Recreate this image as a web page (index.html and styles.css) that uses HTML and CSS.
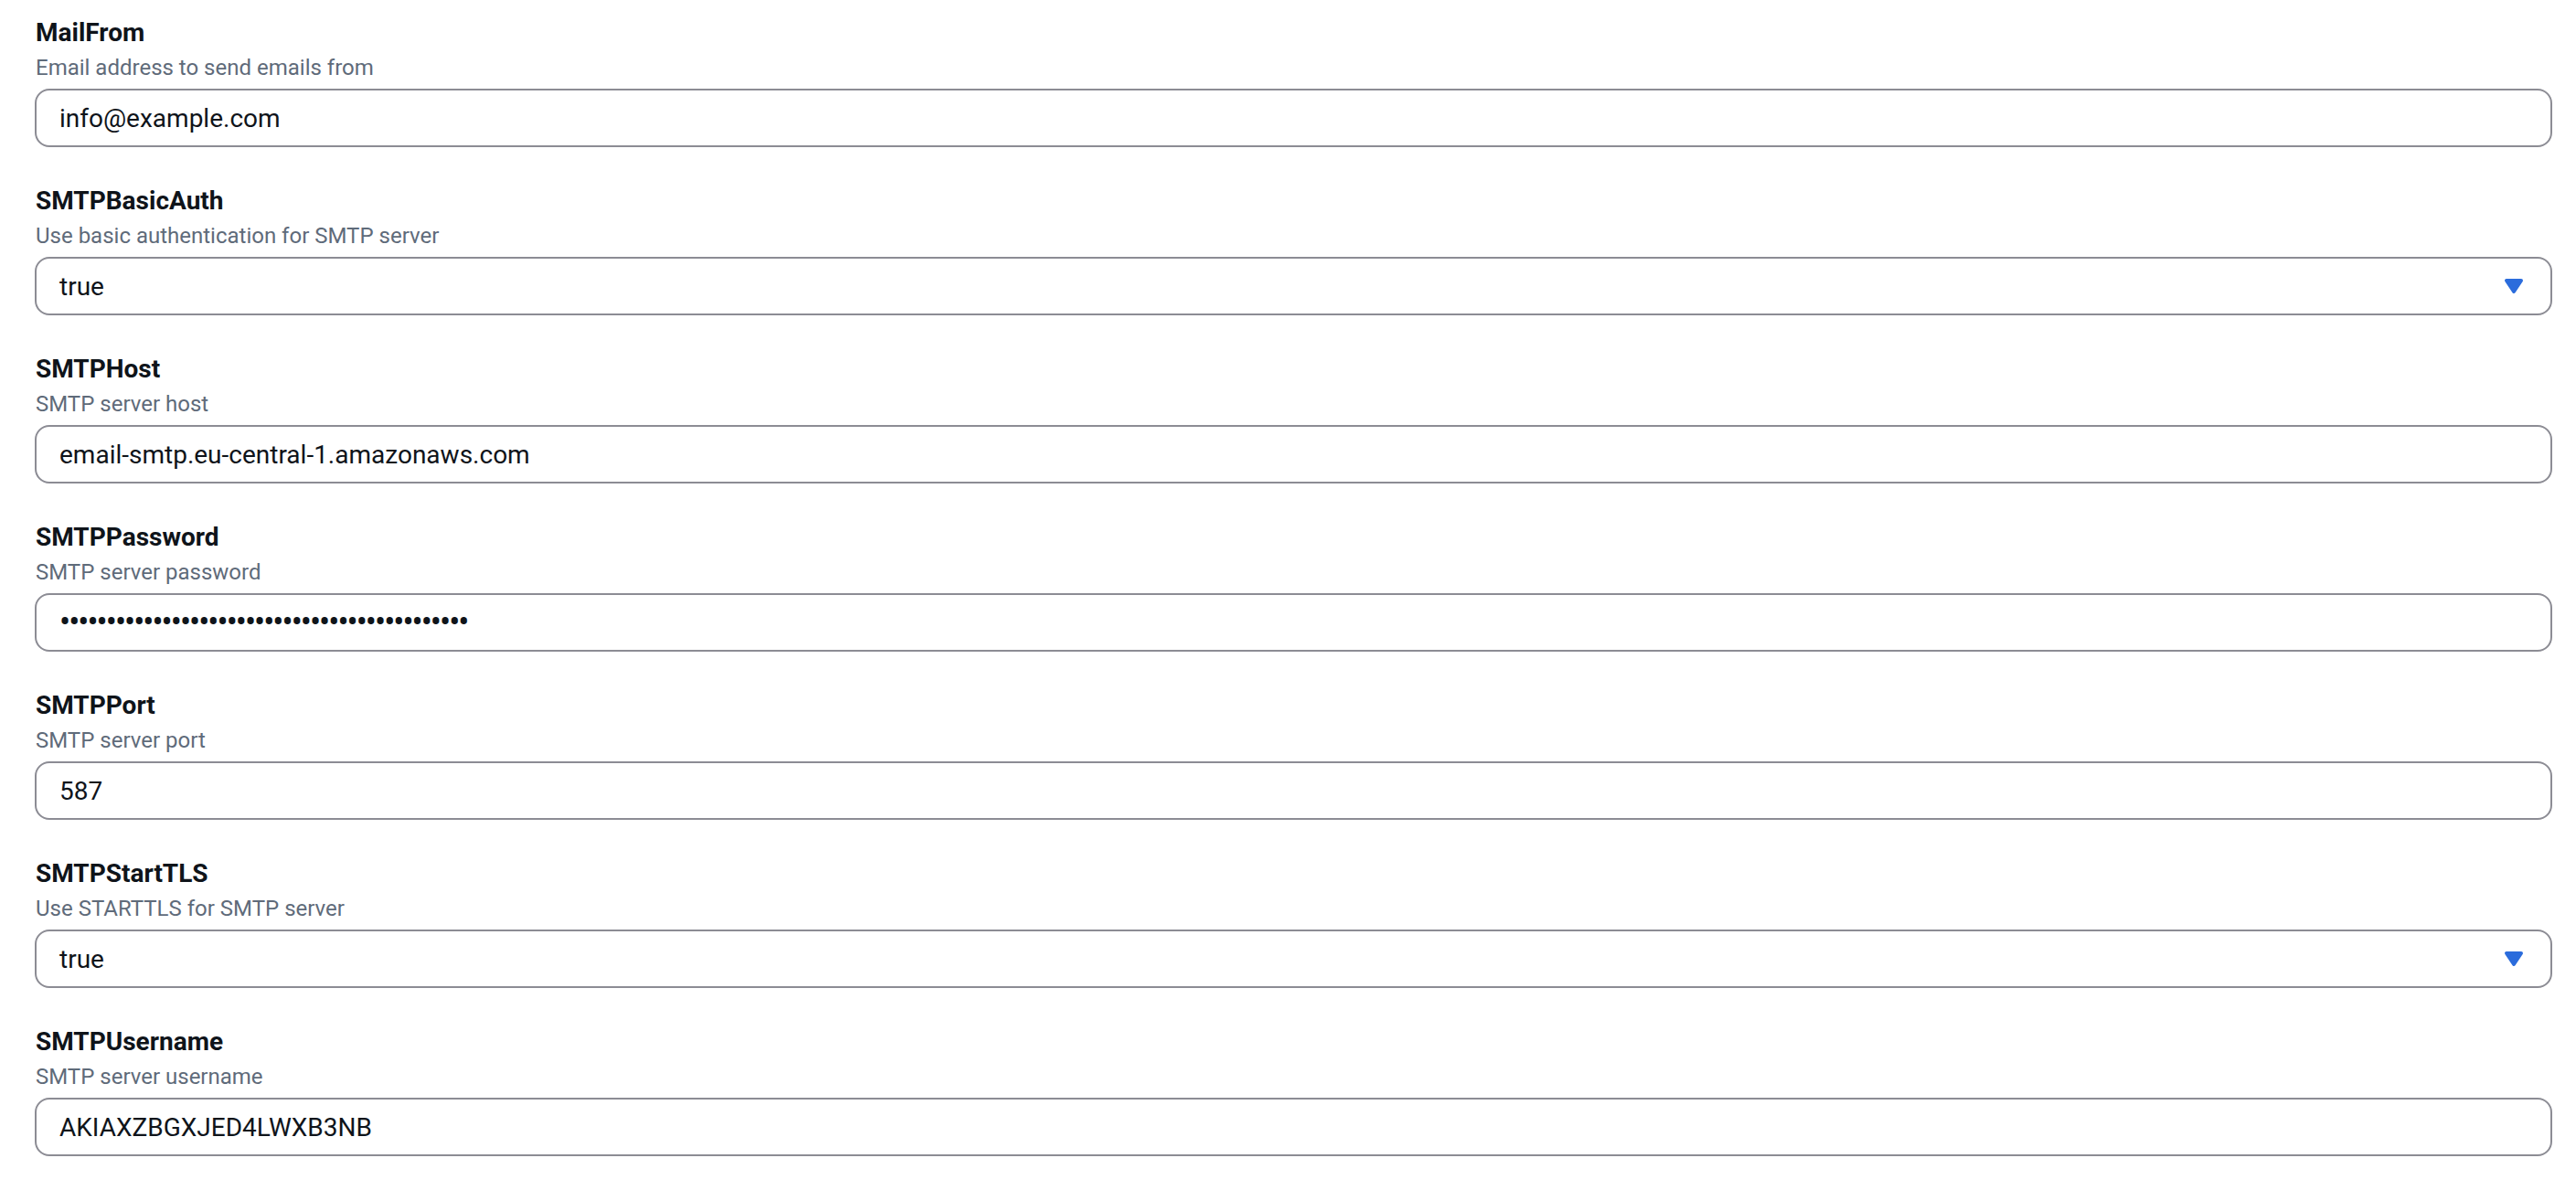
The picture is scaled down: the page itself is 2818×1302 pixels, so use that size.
FILE: index.html
```html
<!DOCTYPE html>
<html lang="en">
<head>
<meta charset="utf-8">
<title>SMTP settings</title>
<link rel="stylesheet" href="styles.css">
</head>
<body>
<form class="form">
  <div class="field">
    <label class="label" for="mailfrom">MailFrom</label>
    <div class="desc">Email address to send emails from</div>
    <input class="control" id="mailfrom" type="text" value="info@example.com">
  </div>
  <div class="field">
    <div class="label">SMTPBasicAuth</div>
    <div class="desc">Use basic authentication for SMTP server</div>
    <div class="control select">
      <span class="select-value">true</span>
      <svg class="caret" viewBox="0 0 16 16" width="32" height="32" aria-hidden="true"><path d="M4 5h8l-4 6-4-6z"/></svg>
    </div>
  </div>
  <div class="field">
    <label class="label" for="host">SMTPHost</label>
    <div class="desc">SMTP server host</div>
    <input class="control" id="host" type="text" value="email-smtp.eu-central-1.amazonaws.com">
  </div>
  <div class="field">
    <label class="label" for="pw">SMTPPassword</label>
    <div class="desc">SMTP server password</div>
    <input class="control password" id="pw" type="password" value="xxxxxxxxxxxxxxxxxxxxxxxxxxxxxxxxxxxxxxxxxxxx">
  </div>
  <div class="field">
    <label class="label" for="port">SMTPPort</label>
    <div class="desc">SMTP server port</div>
    <input class="control" id="port" type="text" value="587">
  </div>
  <div class="field">
    <div class="label">SMTPStartTLS</div>
    <div class="desc">Use STARTTLS for SMTP server</div>
    <div class="control select">
      <span class="select-value">true</span>
      <svg class="caret" viewBox="0 0 16 16" width="32" height="32" aria-hidden="true"><path d="M4 5h8l-4 6-4-6z"/></svg>
    </div>
  </div>
  <div class="field">
    <label class="label" for="user">SMTPUsername</label>
    <div class="desc">SMTP server username</div>
    <input class="control" id="user" type="text" value="AKIAXZBGXJED4LWXB3NB">
  </div>
</form>
</body>
</html>
```

FILE: styles.css
```css
html, body {
  margin: 0;
  padding: 0;
  background: #ffffff;
}

body {
  font-family: Roboto, "Noto Sans", "Liberation Sans", sans-serif;
  color: #0f141a;
}

.form {
  display: flex;
  flex-direction: column;
  gap: 39px;
  padding: 16px 26px 0 38px;
}

.field {
  display: flex;
  flex-direction: column;
}

.label {
  display: block;
  font-size: 28px;
  line-height: 40px;
  font-weight: 700;
  color: #0f141a;
  padding-left: 1px;
}

.desc {
  font-size: 24px;
  line-height: 32px;
  padding-top: 2px;
  padding-left: 1px;
  color: #5f6b7a;
}

.control {
  box-sizing: border-box;
  width: 100%;
  height: 64px;
  margin: 7px 0 0 0;
  padding: 0 24px 0 25px;
  border: 2px solid #8c8c94;
  border-radius: 16px;
  background: #ffffff;
  font-family: Roboto, "Noto Sans", "Liberation Sans", sans-serif;
  font-size: 28px;
  color: #0f141a;
  outline: none;
}

.password {
  font-size: 36px;
  letter-spacing: -2px;
}

.select {
  display: flex;
  align-items: center;
  justify-content: space-between;
}

.caret {
  display: block;
  flex: none;
}

.caret path {
  fill: #2b6cdc;
  stroke: #2b6cdc;
  stroke-width: 2;
  stroke-linejoin: round;
}
```
